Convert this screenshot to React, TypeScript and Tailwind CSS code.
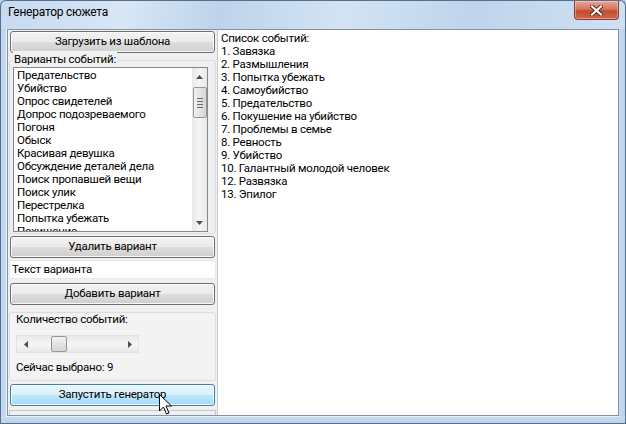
import React from "react";

const listItems = [
  "Предательство",
  "Убийство",
  "Опрос свидетелей",
  "Допрос подозреваемого",
  "Погоня",
  "Обыск",
  "Красивая девушка",
  "Обсуждение деталей дела",
  "Поиск пропавшей вещи",
  "Поиск улик",
  "Перестрелка",
  "Попытка убежать",
  "Похищение",
];

const events = [
  "Список событий:",
  "1. Завязка",
  "2. Размышления",
  "3. Попытка убежать",
  "4. Самоубийство",
  "5. Предательство",
  "6. Покушение на убийство",
  "7. Проблемы в семье",
  "8. Ревность",
  "9. Убийство",
  "10. Галантный молодой человек",
  "12. Развязка",
  "13. Эпилог",
];

function Btn({ label, hot = false }: { label: string; hot?: boolean }) {
  return (
    <div
      className={
        "h-[22px] mx-[2px] rounded-[3px] border flex items-center justify-center shadow-[inset_0_0_0_1px_rgba(255,255,255,0.8)] " +
        (hot
          ? "border-[#3c7fb1] bg-[linear-gradient(#eaf6fd_0%,#d9f0fc_50%,#bee6fd_51%,#a7d9f5_100%)]"
          : "border-[#707070] bg-[linear-gradient(#f2f2f2_0%,#ebebeb_50%,#dddddd_51%,#cfcfcf_100%)]")
      }
    >
      <span className="leading-none">{label}</span>
    </div>
  );
}

export default function App() {
  return (
    <div
      className="relative w-[626px] h-[424px] overflow-hidden text-[11.5px] tracking-[-0.25px] text-black bg-[#bcd3ec]"
      style={{ fontFamily: 'Roboto, "Noto Sans", sans-serif' }}
    >
      {/* title bar */}
      <div className="relative h-[29px] border-t border-x border-[#55708f] rounded-t-[6px] bg-[linear-gradient(100deg,#c7daef_0%,#d8e6f5_20%,#bed3eb_35%,#d3e3f3_55%,#bfd4ec_75%,#cfe0f2_100%)] flex items-start">
        <span className="ml-[7px] mt-[4px] text-[12px] leading-[15px] text-black">Генератор сюжета</span>
        <div className="flex-1" />
        <div className="mr-[6px] w-[45px] h-[19px] rounded-b-[4px] border border-t-0 border-[#8a3a2e] bg-[linear-gradient(#e8a595_0%,#d8765f_45%,#c24a31_55%,#d0674a_100%)] flex items-center justify-center shadow-[inset_0_0_0_1px_rgba(255,255,255,0.35)]">
          <svg width="13" height="11" viewBox="0 0 13 11">
            <path d="M2 1.5 L11 9.5 M11 1.5 L2 9.5" stroke="#5a2318" strokeWidth="4" strokeLinecap="square" />
            <path d="M2 1.5 L11 9.5 M11 1.5 L2 9.5" stroke="#ffffff" strokeWidth="2.2" strokeLinecap="square" />
          </svg>
        </div>
      </div>

      <div className="flex h-[387px]">
        <div className="w-[7px] border-l border-[#55708f] bg-[linear-gradient(90deg,#bcd3ec,#c9dcf0)]" />
        <div className="flex-1 flex border border-[#8393a7] shadow-[0_0_0_1px_#e8f0f8]">
          {/* left panel */}
          <div className="w-[209px] bg-[#f0f0f0] flex flex-col pt-[1px]">
            <Btn label="Загрузить из шаблона" />
            {/* group 1 */}
            <div className="relative mt-[7px] mx-[1px] h-[174px] border border-[#d5dfe5] rounded-[3px] flex flex-col">
              <span className="absolute left-[3px] -top-[9px] bg-[#f0f0f0] px-[1px] leading-[15px]">
                Варианты событий:
              </span>
              <div className="mt-[6px] ml-[3px] mr-[7px] h-[165px] bg-white border border-[#828790] flex">
                <div className="flex-1 overflow-hidden pl-[3px] pt-[1px]">
                  {listItems.map((t) => (
                    <div key={t} className="h-[13px] leading-[13px] whitespace-nowrap">
                      {t}
                    </div>
                  ))}
                </div>
                <div className="w-[15px] bg-[linear-gradient(90deg,#e8e8e8,#f5f5f5,#e8e8e8)] flex flex-col items-center">
                  <div className="h-[17px] flex items-center justify-center">
                    <svg width="7" height="4" viewBox="0 0 7 4">
                      <path d="M0 4 L3.5 0 L7 4 Z" fill="#4d4d4d" />
                    </svg>
                  </div>
                  <div className="mt-[2px] w-[14px] h-[31px] rounded-[2px] border border-[#959595] bg-[linear-gradient(90deg,#f3f3f3,#e3e3e3_50%,#d6d6d6)] flex flex-col items-center justify-center gap-[2px]">
                    <div className="w-[6px] h-[1px] bg-[#6b6b6b]" />
                    <div className="w-[6px] h-[1px] bg-[#6b6b6b]" />
                    <div className="w-[6px] h-[1px] bg-[#6b6b6b]" />
                    <div className="w-[6px] h-[1px] bg-[#6b6b6b]" />
                  </div>
                  <div className="flex-1" />
                  <div className="h-[17px] flex items-center justify-center">
                    <svg width="7" height="4" viewBox="0 0 7 4">
                      <path d="M0 0 L7 0 L3.5 4 Z" fill="#4d4d4d" />
                    </svg>
                  </div>
                </div>
              </div>
            </div>
            <div className="mt-[2px]">
              <Btn label="Удалить вариант" />
            </div>
            <div className="mt-[2px] mx-[1px] h-[19px] bg-white border border-[#e3e9ef] flex items-center pl-[2px]">
              Текст варианта
            </div>
            <div className="mt-[4px]">
              <Btn label="Добавить вариант" />
            </div>
            {/* group 2 */}
            <div className="relative mt-[7px] mx-[1px] h-[69px] border border-[#d5dfe5] rounded-[3px] bg-[#f3f3f3] flex flex-col">
              <span className="absolute left-[6px] -top-[1px] leading-[15px]">Количество событий:</span>
              <div className="mt-[22px] ml-[6px] w-[123px] h-[18px] bg-[linear-gradient(#e9e9e9,#f6f6f6,#e9e9e9)] border border-[#e3e3e3] flex items-center">
                <div className="w-[17px] flex items-center justify-center">
                  <svg width="4" height="7" viewBox="0 0 4 7">
                    <path d="M4 0 L0 3.5 L4 7 Z" fill="#4d4d4d" />
                  </svg>
                </div>
                <div className="ml-[17px] w-[16px] h-[16px] rounded-[2px] border border-[#959595] bg-[linear-gradient(#f3f3f3,#e3e3e3_50%,#d6d6d6)]" />
                <div className="flex-1" />
                <div className="w-[17px] flex items-center justify-center">
                  <svg width="4" height="7" viewBox="0 0 4 7">
                    <path d="M0 0 L4 3.5 L0 7 Z" fill="#4d4d4d" />
                  </svg>
                </div>
              </div>
              <div className="mt-[7px] ml-[6px] leading-[15px]">Сейчас выбрано: 9</div>
            </div>
            <div className="mt-[3px]">
              <Btn label="Запустить генератор" hot />
            </div>
            <div className="mt-[4px] mx-[1px] flex-1 border-t border-x border-[#c8c8c8] bg-[#f0f0f0]" />
          </div>
          {/* right text area */}
          <div className="flex-1 bg-white border-l border-[#c9c9c9] pl-[3px] pt-[2px]">
            {events.map((e) => (
              <div key={e} className="h-[13px] leading-[13px] whitespace-nowrap">
                {e}
              </div>
            ))}
          </div>
        </div>
        <div className="w-[7px] border-r border-[#55708f] bg-[linear-gradient(90deg,#c9dcf0,#bcd3ec)]" />
      </div>
      <div className="h-[8px] border-x border-b border-[#55708f] bg-[linear-gradient(#c9dcf0,#bcd3ec)]" />

      {/* mouse cursor overlay */}
      <svg className="absolute left-[159px] top-[394px]" width="14" height="22" viewBox="0 0 14 22">
        <path
          d="M0.5 0.5 L0.5 17 L4.5 13 L7.5 20 L10 19 L7 12 L12.5 12 Z"
          fill="#ffffff"
          stroke="#000000"
          strokeWidth="1"
          strokeLinejoin="miter"
        />
      </svg>
    </div>
  );
}
